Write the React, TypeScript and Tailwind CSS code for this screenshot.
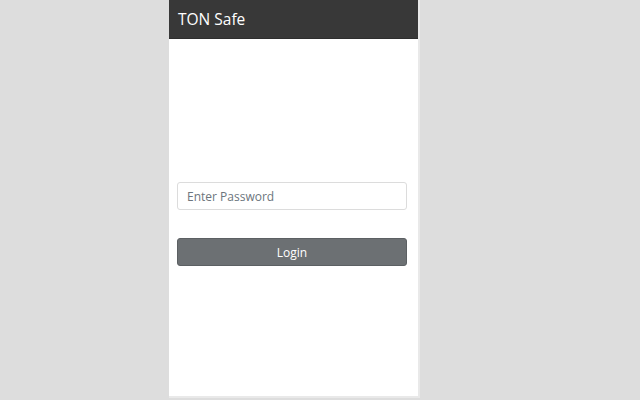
import React from "react";

export default function App() {
  return (
    <div
      className="w-[640px] h-[400px] bg-[#dddddd] overflow-hidden"
      style={{ fontFamily: '"Open Sans", "Noto Sans", sans-serif' }}
    >
      <div className="ml-[169px] w-[251px] h-[398px] bg-white border-r-2 border-b-2 border-[#e9e9e9] flex flex-col">
        <div className="h-[39px] bg-[#383838] flex items-center pl-[9px] pt-[1px] border-b border-[#2e2e2e]">
          <span className="text-white text-[15.5px] leading-none">TON Safe</span>
        </div>
        <div className="pl-[8px] pr-[11px] flex flex-col">
          <input
            type="password"
            placeholder="Enter Password"
            className="mt-[143px] h-[28px] w-full border border-[#dcdcdc] rounded-[3px] px-[9px] pt-[1px] text-[12px] text-[#495057] placeholder:text-[#6c757d] outline-none bg-white"
          />
          <button className="mt-[28px] h-[28px] w-full bg-[#6c7073] border border-[#5c6063] rounded-[3px] text-white text-[12px] pt-[1px] flex items-center justify-center">
            Login
          </button>
        </div>
      </div>
    </div>
  );
}
